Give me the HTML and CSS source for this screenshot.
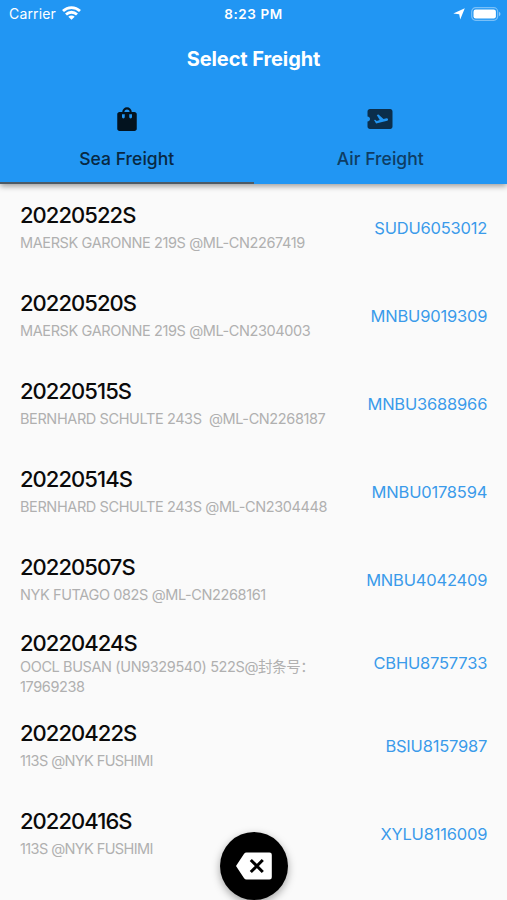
FILE: index.html
```html
<!DOCTYPE html>
<html lang="en">
<head>
    <meta charset="UTF-8">
    <meta name="viewport" content="width=device-width, initial-scale=1.0">
    <title>Select Freight</title>
    <link rel="stylesheet" href="styles.css">
</head>
<body>
    <header>
        <div class="status-bar">
            <div class="carrier">
                <span>Carrier</span>
                <svg width="19" height="14" viewBox="0 0 19 14" fill="none" stroke="#fff" stroke-width="2.8">
                    <path d="M1 5C5.8.4 13.2.4 18 5"/>
                    <path d="M4 8.500c3.200-3 7.800-3 11 0"/>
                    <path d="M9.500 13.800L6.300 10.700c1.800-1.600 4.600-1.600 6.400 0z" fill="#fff" stroke="none"/>
                </svg>
            </div>
            <div class="time">8:23 PM</div>
            <div class="indicators">
                <svg width="12" height="12" viewBox="0 0 12 12"><path d="M11.800.300L7.200 11.600 6.200 6.200.300 5.600z" fill="#fff"/></svg>
                <svg width="30" height="14" viewBox="0 0 30 14">
                    <rect x=".7" y=".7" width="26" height="12.600" rx="4" fill="none" stroke="#fff" stroke-opacity=".4" stroke-width="1.200"/>
                    <rect x="2.500" y="2.500" width="22.400" height="9" rx="2.200" fill="#fff"/>
                    <path d="M28 4.800c2 .8 2 3.600 0 4.400z" fill="#fff" fill-opacity=".5"/>
                </svg>
            </div>
        </div>
        <h1>Select Freight</h1>
        <nav>
            <a class="tab active">
                <svg width="30" height="30" viewBox="0 0 24 24" fill="#03131f"><path fill-rule="evenodd" d="M18 6.400h-2.200a3.800 3.800 0 0 0-7.600 0H6c-1 0-1.800.8-1.800 1.800v11.600c0 1 .8 1.800 1.800 1.800h12c1 0 1.800-.8 1.800-1.800V8.200c0-1-.8-1.800-1.800-1.800zM9.900 6.400a2.100 2.100 0 0 1 4.200 0zM10.200 10.400a1.100 1.100 0 0 1-2.200 0V8.100h2.200zm5.800 0a1.100 1.100 0 0 1-2.200 0V8.100H16z"/></svg>
                <span>Sea Freight</span>
            </a>
            <a class="tab">
                <svg width="30" height="30" viewBox="0 0 24 24" fill="#0b2e4b"><path d="M20.190 4H4c-1.100 0-1.990.9-1.990 2v4c1.100 0 1.990.9 1.990 2s-.89 2-2 2v4c0 1.100.9 2 2 2h16.190c1 0 1.810-.9 1.810-2V6c0-1.100-.81-2-1.810-2zm-2.460 9.300l-8.860 2.360-1.660-2.880.93-.25 1.260.99 2.390-.64-2.400-4.160 1.400-.38 4.010 3.740 2.440-.65c.51-.14 1.040.17 1.180.68.130.51-.17 1.040-.69 1.190z"/></svg>
                <span>Air Freight</span>
            </a>
        </nav>
    </header>

    <ul class="freight-list">
        <li>
            <div class="info"><h2>20220522S</h2><p>MAERSK GARONNE 219S @ML-CN2267419</p></div>
            <span class="code">SUDU6053012</span>
        </li>
        <li>
            <div class="info"><h2>20220520S</h2><p>MAERSK GARONNE 219S @ML-CN2304003</p></div>
            <span class="code">MNBU9019309</span>
        </li>
        <li>
            <div class="info"><h2>20220515S</h2><p>BERNHARD SCHULTE 243S&nbsp; @ML-CN2268187</p></div>
            <span class="code">MNBU3688966</span>
        </li>
        <li>
            <div class="info"><h2>20220514S</h2><p>BERNHARD SCHULTE 243S @ML-CN2304448</p></div>
            <span class="code">MNBU0178594</span>
        </li>
        <li>
            <div class="info"><h2>20220507S</h2><p>NYK FUTAGO 082S @ML-CN2268161</p></div>
            <span class="code">MNBU4042409</span>
        </li>
        <li class="long">
            <div class="info"><h2>20220424S</h2><p>OOCL BUSAN (UN9329540) 522S@封条号：<br>17969238</p></div>
            <span class="code">CBHU8757733</span>
        </li>
        <li>
            <div class="info"><h2>20220422S</h2><p class="short">113S @NYK FUSHIMI</p></div>
            <span class="code">BSIU8157987</span>
        </li>
        <li>
            <div class="info"><h2>20220416S</h2><p class="short">113S @NYK FUSHIMI</p></div>
            <span class="code">XYLU8116009</span>
        </li>
    </ul>

    <button class="fab" aria-label="Clear">
        <svg width="36" height="28" viewBox="0 0 36 28">
            <path d="M10.500 .5H33.500a2.300 2.300 0 0 1 2.300 2.300v22.400a2.300 2.300 0 0 1-2.300 2.300H10.500a3 3 0 0 1-2.400-1.200L0 14 8.100 1.700A3 3 0 0 1 10.500 .5z" fill="#fff"/>
            <path d="M14.800 8l12 12M26.800 8l-12 12" stroke="#000" stroke-width="3"/>
        </svg>
    </button>
</body>
</html>
```
FILE: styles.css
```css
* {
    margin: 0;
    padding: 0;
    box-sizing: border-box;
}
body {
    height: 900px;
    overflow: hidden;
    background-color: #fafafa;
    font-family: Inter, "Noto Sans CJK SC", sans-serif;
}
header {
    position: relative;
    height: 184px;
    background-color: #2196f3;
    box-shadow: 0 2px 6px rgba(0, 0, 0, 0.4);
}
.status-bar {
    display: grid;
    grid-template-columns: 1fr auto 1fr;
    align-items: center;
    height: 27px;
    padding: 0 6px 0 9px;
    color: #fff;
    font-size: 14px;
}
.carrier {
    display: flex;
    align-items: center;
    gap: 6px;
    letter-spacing: 0.15px;
}
.carrier svg {
    margin-top: -2px;
}
.time {
    margin-left: -3px;
    font-weight: 600;
    font-size: 13.5px;
    letter-spacing: 0.6px;
}
.indicators {
    display: flex;
    align-items: center;
    justify-content: flex-end;
    gap: 6px;
}
h1 {
    height: 64px;
    line-height: 64px;
    color: #fff;
    font-size: 20px;
    font-weight: 700;
    text-align: center;
    letter-spacing: -0.1px;
}
nav {
    display: flex;
    height: 93px;
}
.tab {
    flex: 1;
    display: flex;
    flex-direction: column;
    align-items: center;
    padding-top: 13px;
    color: #0e3d64;
    font-size: 17.5px;
    font-weight: 500;
}
.tab span {
    margin-top: 13px;
    line-height: 24px;
    letter-spacing: 0.05px;
}
.tab.active {
    color: #082842;
    border-bottom: 2px solid #4d5a65;
}
.freight-list {
    list-style: none;
}
.freight-list li {
    display: flex;
    align-items: center;
    justify-content: space-between;
    height: 88px;
    padding: 0 20px;
}
.freight-list .long {
    height: 78px;
}
h2 {
    color: #0a0a0a;
    font-size: 22px;
    font-weight: 500;
    line-height: 34px;
    letter-spacing: -0.95px;
}
.info {
    padding-bottom: 4px;
}
.info p {
    color: #b0b0b0;
    font-size: 14.5px;
    line-height: 22px;
    letter-spacing: -0.39px;
    white-space: nowrap;
}
.info .short {
    letter-spacing: -0.6px;
}
.long .info {
    padding-bottom: 0;
}
.long h2 {
    line-height: 28px;
}
.long p {
    line-height: 20px;
}
.code {
    margin-right: -0.2px;
    color: #3a9bea;
    font-size: 16.5px;
    letter-spacing: -0.2px;
}
.fab {
    position: absolute;
    left: 220px;
    top: 832px;
    width: 68px;
    height: 68px;
    display: flex;
    align-items: center;
    justify-content: center;
    border: none;
    border-radius: 50%;
    background-color: #000;
    box-shadow: 0 3px 8px rgba(0, 0, 0, 0.35);
}
```
